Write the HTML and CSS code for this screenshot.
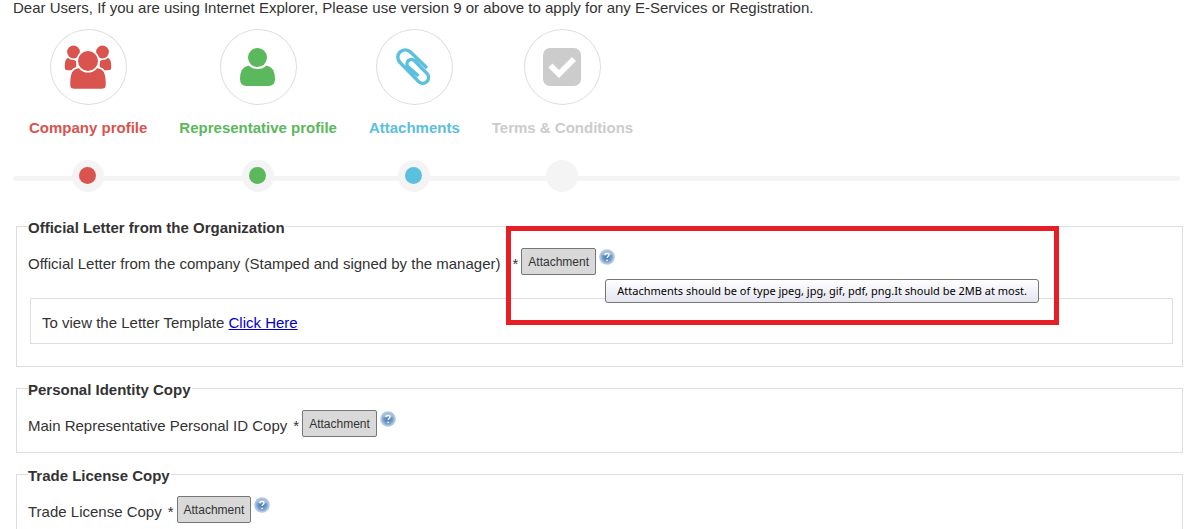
FILE: index.html
```
<!DOCTYPE html>
<html lang="en">

<head>
    <meta charset="UTF-8">
    <meta name="viewport" content="width=device-width, initial-scale=1.0">
    <title>Registration - Attachments</title>
    <link rel="stylesheet" href="styles.css">
</head>

<body>
    <!-- shared help icon -->
    <svg class="sprite" aria-hidden="true">
        <defs>
            <radialGradient id="ball" cx="50%" cy="50%" r="55%">
                <stop offset="0" stop-color="#3f74b0" />
                <stop offset="0.6" stop-color="#6d9bcb" />
                <stop offset="1" stop-color="#a9c5e2" />
            </radialGradient>
            <symbol id="help" viewBox="0 0 16 16">
                <circle cx="8" cy="8" r="7.8" fill="#b4c8de" />
                <circle cx="8" cy="8" r="6.3" fill="url(#ball)" />
                <path d="M3 5.5a5.6 5.6 0 0 1 10 0q-5 2-10 0z" fill="#fff" opacity="0.35" />
                <path d="M6 6.2Q6 4.3 8 4.3t2 1.8q0 1-1.1 1.6-.8.4-.8 1.4" fill="none" stroke="#fff" stroke-width="1.3" />
                <circle cx="8.1" cy="11.3" r="0.9" fill="#fff" />
            </symbol>
        </defs>
    </svg>

    <header>
        <p class="notice">Dear Users, If you are using Internet Explorer, Please use version 9 or above to apply for any E-Services or Registration.</p>
        <ol class="steps">
            <li class="step company">
                <span class="circle">
                    <svg width="48" height="46" viewBox="0 0 48 46" fill="currentColor" stroke="#fff" stroke-width="1.6" aria-hidden="true">
                        <path d="M5 12.5Q0 14 0 21v3q0 3 4 3h9V16.5q-4-1-5-4z" />
                        <path d="M43 12.5q5 1.500 5 8.500v3q0 3-4 3h-9V16.5q4-1 5-4z" />
                        <circle cx="9.5" cy="8" r="7.2" />
                        <circle cx="38.5" cy="8" r="7.2" />
                        <path d="M14 23.5q-8.500 1-8.500 14v4q0 4 5 4h27q5 0 5-4v-4q0-13-8.500-14z" />
                        <circle cx="24" cy="17" r="10.8" />
                    </svg>
                </span>
                <strong class="label">Company profile</strong>
                <span class="dot"></span>
            </li>
            <li class="step representative">
                <span class="circle">
                    <svg width="36" height="38" viewBox="0 0 36 38" fill="currentColor" aria-hidden="true">
                        <path d="M8.5 17.5Q0 19 0 31q0 7 6.5 7h22q6.5 0 6.5-7 0-12-8.5-13.5-3.5 3.5-9 3.5t-9-3.500z" />
                        <circle cx="17.5" cy="9.5" r="9.5" />
                    </svg>
                </span>
                <strong class="label">Representative profile</strong>
                <span class="dot"></span>
            </li>
            <li class="step attachments">
                <span class="circle">
                    <svg width="36" height="38" viewBox="0 0 36 38" fill="none" stroke="currentColor" stroke-width="3.4" aria-hidden="true">
                        <path d="M31 20L14.5 4A7.3 7.3 0 0 0 4 14.5L23 34A5.9 5.9 0 0 0 31.5 26L18.5 12.8A4.3 4.3 0 0 0 12.3 19L22.5 28" />
                    </svg>
                </span>
                <strong class="label">Attachments</strong>
                <span class="dot"></span>
            </li>
            <li class="step terms">
                <span class="circle">
                    <svg width="38" height="38" viewBox="0 0 38 38" aria-hidden="true">
                        <rect width="38" height="38" rx="7" fill="currentColor" />
                        <path d="M5.5 19.5l4-4L16 22 29 9l4 4-17 17z" fill="#fff" />
                    </svg>
                </span>
                <strong class="label">Terms &amp; Conditions</strong>
                <span class="dot"></span>
            </li>
        </ol>
    </header>

    <main>
        <fieldset class="letter">
            <legend>Official Letter from the Organization</legend>
            <div class="row">
                <span class="name" id="letter">Official Letter from the company (Stamped and signed by the manager)</span>
                <span class="required">*</span>
                <div class="upload">
                    <button type="button" aria-describedby="letter">Attachment</button>
                    <svg class="help" aria-hidden="true"><use href="#help" /></svg>
                    <div class="highlight"></div>
                    <div class="tooltip" role="tooltip">Attachments should be of type jpeg, jpg, gif, pdf, png.It should be 2MB at most.</div>
                </div>
            </div>
            <p class="template">To view the Letter Template <a href="#">Click Here</a></p>
        </fieldset>

        <fieldset>
            <legend>Personal Identity Copy</legend>
            <div class="row">
                <span class="name" id="identity">Main Representative Personal ID Copy</span>
                <span class="required">*</span>
                <div class="upload">
                    <button type="button" aria-describedby="identity">Attachment</button>
                    <svg class="help" aria-hidden="true"><use href="#help" /></svg>
                </div>
            </div>
        </fieldset>

        <fieldset>
            <legend>Trade License Copy</legend>
            <div class="row">
                <span class="name" id="license">Trade License Copy</span>
                <span class="required">*</span>
                <div class="upload">
                    <button type="button" aria-describedby="license">Attachment</button>
                    <svg class="help" aria-hidden="true"><use href="#help" /></svg>
                </div>
            </div>
        </fieldset>
    </main>
</body>

</html>
```
FILE: styles.css
```
* {
    box-sizing: border-box;
}
body {
    margin: 0;
    font-family: "Liberation Sans", Arial, sans-serif;
    font-size: 15px;
    line-height: 18px;
    color: #333;
    background: #fff;
    overflow: hidden;
}
.sprite {
    position: absolute;
    width: 0;
    height: 0;
}
header {
    padding: 0 9px 0 13px;
}
.notice {
    margin: 0;
    line-height: 16px;
}

/* steps */
.steps {
    position: relative;
    display: flex;
    gap: 32px;
    margin: 0;
    padding: 13px 16px 0;
    list-style: none;
}
.steps::before {
    content: "";
    position: absolute;
    left: 0;
    right: 0;
    bottom: 11px;
    height: 5px;
    border-radius: 3px;
    background: #f4f4f4;
}
.step {
    position: relative;
    display: flex;
    flex-direction: column;
    align-items: center;
}
.circle {
    display: flex;
    align-items: center;
    justify-content: center;
    width: 77px;
    height: 76px;
    border: 1px solid #ddd;
    border-radius: 50%;
}
.label {
    margin: 14px 0 23px;
}
.dot {
    width: 32px;
    height: 32px;
    border: 7px solid #f4f4f4;
    border-width: 7px 7px 8px;
    border-radius: 50%;
    background: #f4f4f4;
}
.dot::before {
    content: "";
    display: block;
    width: 17px;
    height: 17px;
    border-radius: 50%;
    background: currentColor;
}
.company {
    color: #d9534f;
}
.representative {
    color: #5cb85c;
}
.attachments {
    color: #5bc0de;
}
.terms {
    color: #ccc;
}
.terms .dot {
    color: #f4f4f4;
}

/* form */
main {
    display: flex;
    flex-direction: column;
    gap: 10px;
    padding: 23px 6px 0 16px;
}
fieldset {
    margin: 0;
    min-width: 0;
    padding: 11px 9px 15px 11px;
    border: 1px solid #ddd;
}
legend {
    padding: 4px 1px 0 0;
    font-weight: bold;
}
.letter {
    padding-bottom: 22px;
}
.row {
    display: flex;
    align-items: center;
}
.name,
.required {
    padding-top: 4px;
}
.required {
    margin: 0 3px 0 6px;
}
.letter .required {
    margin-left: 12px;
}
.upload {
    position: relative;
    display: flex;
    gap: 3px;
}
button {
    height: 27px;
    padding: 0 6px;
    border: 1px solid #777;
    border-radius: 2px;
    background: #d9d9d9;
    font: 12px "Liberation Sans", Arial, sans-serif;
    color: #333;
}
.help {
    width: 16px;
    height: 16px;
    margin-top: 1px;
}
.template {
    margin: 23px 0 0 2px;
    padding: 15px 11px 11px;
    border: 1px solid #ddd;
}
a {
    color: #0000c8;
}
.highlight {
    position: absolute;
    top: -22px;
    left: -15px;
    width: 553px;
    height: 99px;
    border: 5px solid #e81e25;
}
.tooltip {
    position: absolute;
    top: 31px;
    left: 84px;
    padding: 2px 11px;
    border: 1px solid #767676;
    border-radius: 3px;
    background: linear-gradient(#fff, #e4e5f0);
    font-family: "Noto Sans", "Open Sans", sans-serif;
    font-size: 11px;
    color: #000;
    white-space: nowrap;
}
```
